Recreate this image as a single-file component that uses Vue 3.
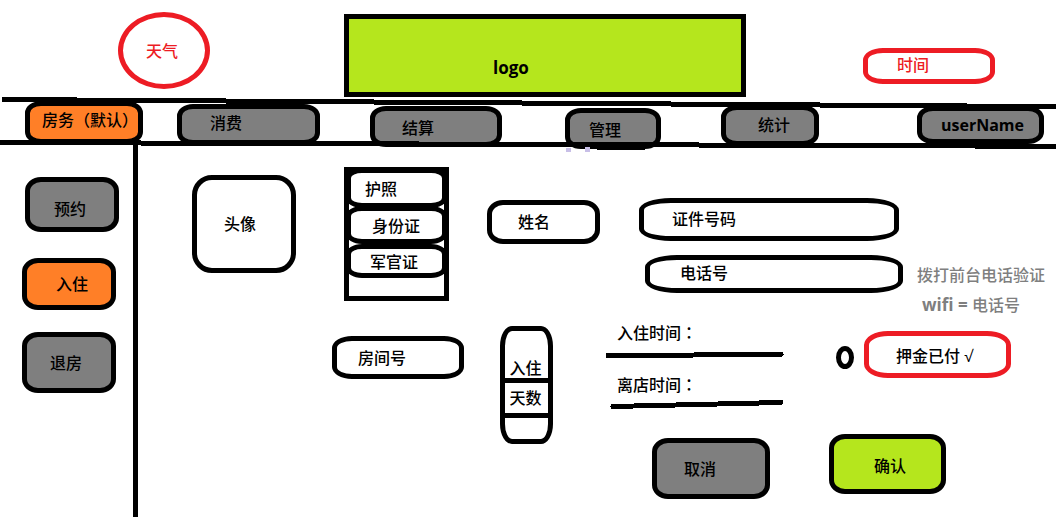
<script setup>
import { ref } from 'vue'

const navItems = ['房务（默认）', '消费', '结算', '管理', '统计', 'userName']
const sideItems = ['预约', '入住', '退房']
const idTypes = ['护照', '身份证', '军官证']

const activeNav = ref('房务（默认）')
const activeSide = ref('入住')
const name = ref('')
const idNumber = ref('')
const phone = ref('')
const room = ref('')
const days = ref('')
const checkIn = ref('')
const checkOut = ref('')
const paid = ref(false)
</script>

<template>
  <div class="page">
    <header class="header">
      <div class="weather">天气</div>
      <div class="logo">logo</div>
      <div class="clock">时间</div>
    </header>

    <nav class="nav">
      <button
        v-for="item in navItems"
        :key="item"
        type="button"
        class="box nav-item"
        :class="{ active: item === activeNav }"
        @click="activeNav = item"
      >{{ item }}</button>
      <svg class="rules" viewBox="0 0 1056 55" preserveAspectRatio="none" aria-hidden="true">
        <path class="stroke" d="M2 2.5 L1056 9.6 M0 45.5 L1056 49.3" />
        <path class="stroke" d="M597 50.5 H645" />
        <rect class="mark" x="566" y="51" width="5" height="4" />
        <rect class="mark" x="585" y="50" width="5" height="5" />
      </svg>
    </nav>

    <div class="body">
      <aside class="side">
        <button
          v-for="item in sideItems"
          :key="item"
          type="button"
          class="box side-item"
          :class="{ active: item === activeSide }"
          @click="activeSide = item"
        >{{ item }}</button>
      </aside>

      <main class="main">
        <section class="guest">
          <div class="avatar">头像</div>
          <div class="types">
            <button v-for="type in idTypes" :key="type" type="button" class="box type">{{ type }}</button>
          </div>
          <input v-model="name" class="box name" type="text" placeholder="姓名" aria-label="姓名" />
          <div class="fields">
            <input v-model="idNumber" class="box wide" type="text" placeholder="证件号码" aria-label="证件号码" />
            <input v-model="phone" class="box wide phone" type="tel" placeholder="电话号" aria-label="电话号" />
          </div>
          <div class="hint">
            <p>拨打前台电话验证</p>
            <p class="wifi"><span class="latin">wifi = </span>电话号</p>
          </div>
        </section>

        <section class="stay">
          <input v-model="room" class="box room" type="text" placeholder="房间号" aria-label="房间号" />
          <div class="days">
            <label class="days-top" for="days">入住</label>
            <label class="days-mid" for="days">天数</label>
            <input id="days" v-model="days" class="days-input" type="text" />
          </div>
          <div class="booking">
            <div class="details">
              <div class="times">
                <div class="time">
                  <label for="check-in">入住时间<span class="colon">：</span></label>
                  <input id="check-in" v-model="checkIn" type="text" />
                </div>
                <svg class="line line-in" viewBox="0 0 179 8" preserveAspectRatio="none" aria-hidden="true">
                  <path class="stroke round" d="M3 4.5 L176 3.5" />
                </svg>
                <div class="time time-out">
                  <label for="check-out">离店时间<span class="colon">：</span></label>
                  <input id="check-out" v-model="checkOut" type="text" />
                </div>
                <svg class="line line-out" viewBox="0 0 179 10" preserveAspectRatio="none" aria-hidden="true">
                  <path class="stroke round" d="M8 6.5 L176 2.5" />
                </svg>
              </div>
              <input id="paid" v-model="paid" class="check" type="checkbox" />
              <label class="deposit" for="paid">押金已付 √</label>
            </div>
            <div class="actions">
              <button type="button" class="box cancel">取消</button>
              <button type="button" class="box confirm">确认</button>
            </div>
          </div>
        </section>
      </main>
    </div>
  </div>
</template>

<style>
body {
  margin: 0;
  background: #fff;
}
</style>

<style scoped>
.page,
.page * {
  box-sizing: border-box;
  min-width: 0;
}

.page {
  display: flex;
  flex-direction: column;
  min-height: 100vh;
  overflow: hidden;
  color: #000;
  font: 500 16px/20px "Open Sans", "Noto Sans CJK SC", sans-serif;
  white-space: nowrap;
}

button,
input {
  margin: 0;
  font: inherit;
  color: inherit;
}

input::placeholder {
  color: #000;
  opacity: 1;
}

.box {
  border: 5px solid #000;
  border-radius: 16px / 14px;
  padding: 0;
  background: #fff;
  text-align: left;
}

/* Header */
.header {
  display: grid;
  grid-template-columns: 118fr 92fr 134fr 402fr 117fr 132fr 61fr;
  align-items: start;
}

.weather {
  grid-column: 2;
  display: flex;
  align-items: center;
  justify-content: center;
  height: 77px;
  margin-top: 12px;
  padding-right: 4px;
  border: 5px solid #ed1c24;
  border-radius: 50%;
  color: #ed1c24;
}

.logo {
  grid-column: 4;
  height: 83px;
  margin-top: 14px;
  padding: 39px 0 0 144px;
  border: 5px solid #000;
  background: #b5e61d;
  font-size: 17px;
  font-weight: 700;
}

.clock {
  grid-column: 6;
  height: 36px;
  margin-top: 48px;
  padding: 2px 0 0 29px;
  border: 5px solid #ed1c24;
  border-radius: 20px / 12px;
  color: #ed1c24;
}

/* Navigation */
.nav {
  position: relative;
  display: grid;
  grid-template-columns: 25fr 118fr 34fr 143fr 50fr 132fr 63fr 96fr 60fr 98fr 98fr 127fr 12fr;
  align-items: start;
  height: 48px;
}

.nav-item {
  height: 41px;
  border-radius: 16px / 12px;
  background: #7f7f7f;
}

.nav-item:nth-child(1) {
  grid-column: 2;
  height: 43px;
  margin-top: 4px;
  padding: 0 0 6px 12px;
}

.nav-item:nth-child(2) {
  grid-column: 4;
  margin-top: 7px;
  padding: 0 0 4px 28px;
}

.nav-item:nth-child(3) {
  grid-column: 6;
  margin-top: 9px;
  padding: 2px 0 0 27px;
}

.nav-item:nth-child(4) {
  grid-column: 8;
  margin-top: 11px;
  padding: 2px 0 0 19px;
}

.nav-item:nth-child(5) {
  grid-column: 10;
  margin-top: 8px;
  padding: 0 0 2px 32px;
}

.nav-item:nth-child(6) {
  grid-column: 12;
  height: 38px;
  margin-top: 9px;
  padding-left: 19px;
  font-weight: 700;
}

.box.active {
  background: #ff7f27;
}

.rules {
  position: absolute;
  top: 0;
  left: 0;
  width: 100%;
  height: 55px;
  pointer-events: none;
}

.stroke {
  fill: none;
  stroke: #000;
  stroke-width: 5px;
  shape-rendering: crispEdges;
}

.round {
  stroke-linecap: round;
}

.mark {
  fill: #c8bfe7;
}

/* Body */
.body {
  display: grid;
  grid-template-columns: 138fr 918fr;
  flex: 1;
}

.side {
  display: grid;
  grid-template-columns: 22fr 94fr 17fr;
  grid-auto-rows: max-content;
  padding-top: 32px;
  border-right: 5px solid #000;
}

.side-item {
  grid-column: 2;
  height: 55px;
  padding-left: 29px;
  background: #7f7f7f;
}

.side-item:nth-child(1) {
  margin: 0 -3px 0 3px;
  padding: 8px 0 0 24px;
}

.side-item:nth-child(2) {
  height: 52px;
  margin-top: 26px;
}

.side-item:nth-child(3) {
  height: 61px;
  margin-top: 22px;
  padding-left: 23px;
}

.main {
  padding-top: 22px;
}

/* Guest */
.guest {
  display: grid;
  grid-template-columns: 54fr 104fr 48fr 105fr 38fr 113fr 39fr 264fr 14fr 139fr;
  align-items: start;
}

.avatar {
  grid-column: 2;
  height: 98px;
  margin-top: 8px;
  padding: 34px 0 0 27px;
  border: 5px solid #000;
  border-radius: 20px;
}

.types {
  grid-column: 4;
  display: flex;
  flex-direction: column;
  height: 134px;
  border: 5px solid #000;
}

.type {
  flex: none;
  height: 40px;
  margin: -4px -3px 0;
  padding: 2px 0 0 14px;
  border-radius: 16px / 10px;
  background: transparent;
}

.type:nth-child(2) {
  height: 38px;
  margin-top: -2px;
  padding-left: 21px;
}

.type:nth-child(3) {
  height: 34px;
  margin-top: 0;
  padding-left: 19px;
}

.name {
  grid-column: 6;
  width: 100%;
  height: 44px;
  margin-top: 33px;
  padding-left: 26px;
}

.fields {
  grid-column: 8;
  display: grid;
  grid-template-columns: 6fr 254fr 4fr;
  gap: 14px 0;
  margin-top: 31px;
}

.wide {
  grid-column: 1 / 3;
  width: 100%;
  height: 43px;
  padding: 0 0 2px 28px;
  border-radius: 32px / 12px;
}

.phone {
  grid-column: 2 / 4;
  height: 38px;
  padding-left: 30px;
}

.hint {
  grid-column: 10;
  margin-top: 93px;
  color: #7f7f7f;
  line-height: 30px;
}

.hint p {
  margin: 0;
}

.hint .wifi {
  padding-left: 5px;
}

.latin {
  font-size: 17px;
  font-weight: 700;
}

/* Stay */
.stay {
  display: grid;
  grid-template-columns: 194fr 132fr 36fr 53fr 52fr 451fr;
  align-items: start;
  margin-top: 3px;
}

.room {
  grid-column: 2;
  width: 100%;
  height: 43px;
  margin-top: 13px;
  padding-left: 21px;
  border-radius: 20px / 12px;
}

.days {
  grid-column: 4;
  display: flex;
  flex-direction: column;
  height: 118px;
  margin-top: 3px;
  padding-right: 2px;
  border: 5px solid #000;
  border-radius: 12px / 20px;
  text-align: center;
}

.days-top {
  padding-top: 27px;
}

.days-mid {
  margin-right: -2px;
  padding: 5px 2px 5px 0;
  border: solid #000;
  border-width: 5px 0;
}

.days-input {
  width: 100%;
  height: 21px;
  padding: 0 4px;
  border: 0;
  background: transparent;
}

.booking {
  grid-column: 6;
}

.details {
  display: grid;
  grid-template-columns: 179fr 52fr 18fr 10fr 147fr 45fr;
  align-items: start;
}

.time {
  display: flex;
  height: 20px;
  padding-left: 12px;
}

.time input {
  flex: 1;
  height: 20px;
  padding: 0;
  border: 0;
  background: transparent;
}

.colon {
  font-family: "Noto Sans CJK TC", sans-serif;
  line-height: 1;
}

.line {
  display: block;
  width: 100%;
}

.line-in {
  height: 8px;
  margin-top: 8px;
}

.time-out {
  margin-top: 16px;
}

.line-out {
  height: 10px;
  margin-top: 5px;
}

.check {
  grid-column: 3;
  appearance: none;
  width: 100%;
  height: 23px;
  margin-top: 23px;
  border: 5px solid #000;
  border-radius: 50%;
}

.check:checked {
  background: #000;
}

.deposit {
  grid-column: 5;
  height: 47px;
  margin-top: 8px;
  padding: 10px 0 0 27px;
  border: 5px solid #ed1c24;
  border-radius: 24px / 14px;
}

.actions {
  display: grid;
  grid-template-columns: 47fr 118fr 59fr 117fr 110fr;
  align-items: start;
  margin-top: 24px;
}

.cancel {
  grid-column: 2;
  height: 61px;
  margin-top: 4px;
  padding-left: 27px;
  background: #7f7f7f;
}

.confirm {
  grid-column: 4;
  height: 60px;
  padding: 4px 0 0 40px;
  background: #b5e61d;
}
</style>
